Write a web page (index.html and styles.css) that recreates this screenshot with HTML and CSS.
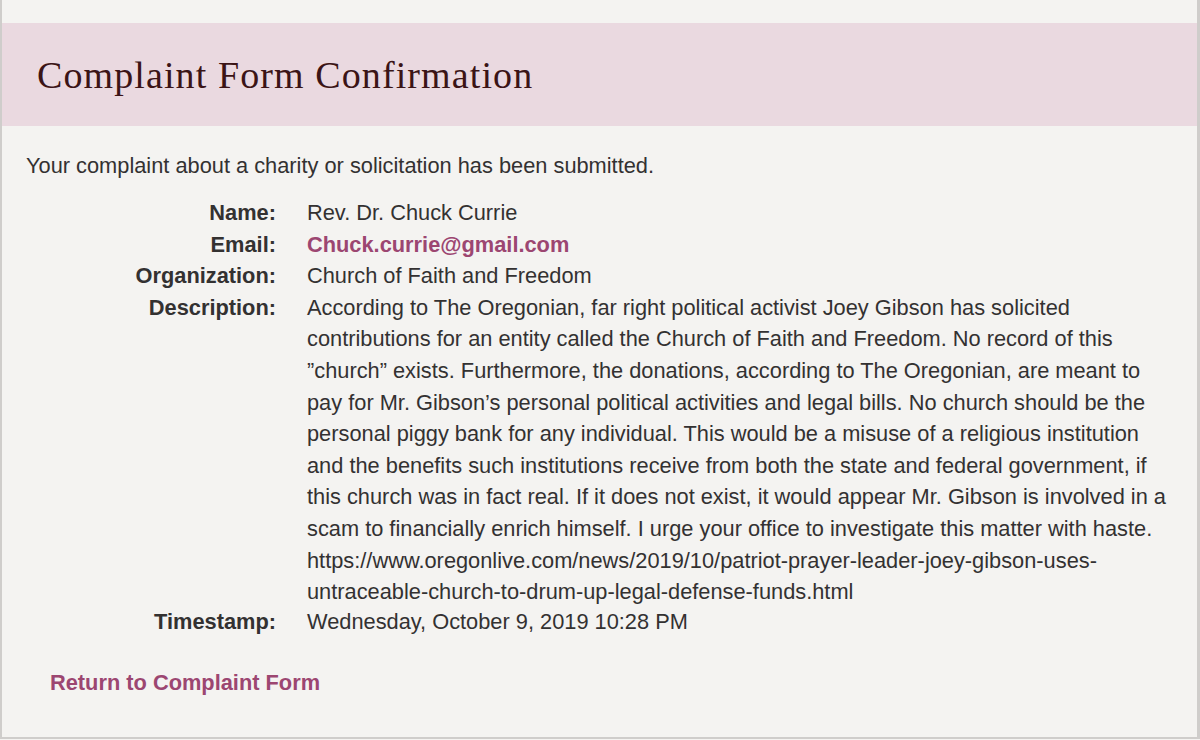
FILE: index.html
```html
<!DOCTYPE html>
<html lang="en">
<head>
<meta charset="utf-8">
<title>Complaint Form Confirmation</title>
<link rel="stylesheet" href="styles.css">
</head>
<body>
<div class="page">
  <header class="banner">
    <h1 class="title">Complaint Form Confirmation</h1>
  </header>
  <main class="content">
    <p class="intro">Your complaint about a charity or solicitation has been submitted.</p>
    <dl class="details">
      <dt>Name:</dt>
      <dd>Rev. Dr. Chuck Currie</dd>
      <dt>Email:</dt>
      <dd><a class="email" href="#">Chuck.currie@gmail.com</a></dd>
      <dt>Organization:</dt>
      <dd>Church of Faith and Freedom</dd>
      <dt>Description:</dt>
      <dd>According to The Oregonian, far right political activist Joey Gibson has solicited<br>contributions for an entity called the Church of Faith and Freedom. No record of this<br>”church” exists. Furthermore, the donations, according to The Oregonian, are meant to<br>pay for Mr. Gibson’s personal political activities and legal bills. No church should be the<br>personal piggy bank for any individual. This would be a misuse of a religious institution<br>and the benefits such institutions receive from both the state and federal government, if<br>this church was in fact real. If it does not exist, it would appear Mr. Gibson is involved in a<br>scam to financially enrich himself. I urge your office to investigate this matter with haste.<br>https://www.oregonlive.com/news/2019/10/patriot-prayer-leader-joey-gibson-uses-<br>untraceable-church-to-drum-up-legal-defense-funds.html</dd>
      <dt class="last">Timestamp:</dt>
      <dd class="last">Wednesday, October 9, 2019 10:28 PM</dd>
    </dl>
    <a class="return" href="#">Return to Complaint Form</a>
  </main>
</div>
</body>
</html>
```

FILE: styles.css
```css
html, body {
  margin: 0;
  padding: 0;
  background: #f4f3f1;
}

.page {
  box-sizing: border-box;
  width: 1200px;
  height: 739px;
  padding-top: 23px;
  border-left: 2px solid #cfcdcb;
  border-right: 3px solid #cfcdcb;
  border-bottom: 2px solid #cfcdcb;
  background: #f4f3f1;
  font-family: "Liberation Sans", Arial, sans-serif;
  color: #333131;
}

.banner {
  height: 103px;
  background: #ead9e0;
  display: flex;
  align-items: center;
  padding-left: 35px;
}

.title {
  margin: 0;
  font-family: "Liberation Serif", "Times New Roman", serif;
  font-weight: normal;
  font-size: 38px;
  color: #3b1416;
  letter-spacing: 1.1px;
}

.content {
  padding: 24px 0 0 24px;
}

.intro {
  margin: 0 0 16px 0;
  font-size: 21.8px;
  line-height: 31px;
}

.details {
  display: grid;
  grid-template-columns: 250px 1fr;
  column-gap: 31px;
  margin: 0;
  font-size: 21.8px;
  line-height: 31.6px;
}

.details dt {
  text-align: right;
  font-weight: bold;
}

.details dd {
  margin: 0;
  white-space: nowrap;
}

.details .last {
  margin-top: -2px;
}

.email {
  color: #9c4671;
  font-weight: bold;
  text-decoration: none;
}

.return {
  display: inline-block;
  margin: 33px 0 0 24px;
  color: #9c4671;
  font-weight: bold;
  font-size: 21.8px;
  text-decoration: none;
}
```
